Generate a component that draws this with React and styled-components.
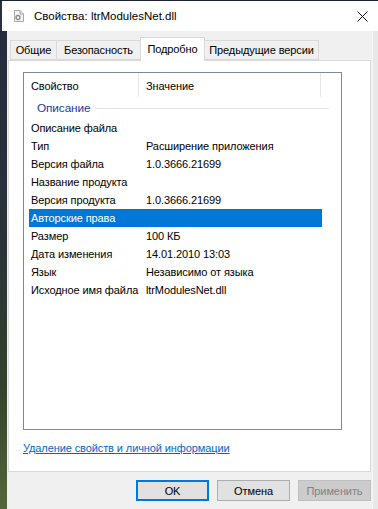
import styled, { createGlobalStyle } from 'styled-components';

const GlobalStyle = createGlobalStyle`
  html, body {
    margin: 0;
    padding: 0;
    background: #1c2132;
  }
  body {
    font-family: "Liberation Sans", Arial, sans-serif;
    font-size: 11px;
    letter-spacing: -0.1px;
    color: #000;
  }
  * {
    box-sizing: border-box;
  }
`;

const Screen = styled.div`
  width: 378px;
  height: 509px;
  padding-top: 1px;
  display: flex;
  flex-direction: column;
  overflow: hidden;
`;

const TitleBar = styled.div`
  height: 30px;
  display: flex;
  align-items: center;
  background: #fff;
  border-left: 2px solid #2a2f40;
  padding-left: 11px;
`;

const TitleText = styled.span`
  margin-left: 10px;
  font-size: 11.5px;
  letter-spacing: 0;
  color: #000;
  flex: 1;
`;

const CloseBtn = styled.div`
  width: 32px;
  height: 30px;
  display: flex;
  align-items: center;
  justify-content: center;
`;

const Body = styled.div`
  flex: 1;
  display: flex;
`;

const DesktopStrip = styled.div`
  width: 7px;
  background: linear-gradient(180deg, #262b3c 0%, #2b3338 45%, #34422c 75%, #56663a 100%);
`;

const Content = styled.div`
  flex: 1;
  background: #f0f0f0;
  padding: 6px 1px 0 1px;
  display: flex;
  flex-direction: column;
`;

const RightEdge = styled.div`
  width: 6px;
  background: #e8e8e8;
  border-left: 1px solid #f6f6f6;
`;

const TabRow = styled.div`
  display: flex;
  align-items: flex-end;
  padding-left: 3px;
  position: relative;
  z-index: 1;
`;

const Tab = styled.div`
  width: ${(p) => p.$w}px;
  height: ${(p) => (p.$active ? '24px' : '20px')};
  margin-bottom: ${(p) => (p.$active ? '-1px' : '0')};
  padding-top: ${(p) => (p.$active ? '4px' : '2px')};
  background: ${(p) => (p.$active ? '#fff' : '#f0f0f0')};
  border: 1px solid #d9d9d9;
  border-bottom: ${(p) => (p.$active ? 'none' : '1px solid #d9d9d9')};
  margin-left: -1px;
  white-space: nowrap;
  text-align: center;
  line-height: 15px;
`;

const Panel = styled.div`
  height: 412px;
  background: #fff;
  border: 1px solid #d9d9d9;
  padding: 11px 28px 0 14px;
  display: flex;
  flex-direction: column;
`;

const ListBox = styled.div`
  height: 358px;
  border: 1px solid #828790;
  display: flex;
  flex-direction: column;
`;

const HeaderRow = styled.div`
  height: 24px;
  display: grid;
  grid-template-columns: 115px 182px 1fr;
`;

const HeaderCell = styled.div`
  padding-left: 7px;
  border-right: 1px solid #e5e5e5;
  display: flex;
  align-items: center;
  padding-top: 1px;
  &:last-child {
    border-right: none;
  }
`;

const GroupRow = styled.div`
  height: 22px;
  display: flex;
  align-items: center;
  padding-left: 13px;
  padding-right: 12px;
  color: #1e3a9e;
  font-size: 11.8px;
`;

const GroupLine = styled.div`
  flex: 1;
  height: 1px;
  background: #e2e2e2;
  margin-left: 5px;
`;

const Row = styled.div`
  height: 18px;
  margin: 0 19px 0 5px;
  display: grid;
  grid-template-columns: 110px 1fr;
  align-items: center;
  background: ${(p) => (p.$selected ? '#0078d7' : 'transparent')};
  color: ${(p) => (p.$selected ? '#fff' : '#000')};
`;

const Cell = styled.div`
  padding-left: 2px;
  white-space: nowrap;
  overflow: hidden;
`;

const ValueCell = styled(Cell)`
  padding-left: 7px;
`;

const Link = styled.a`
  margin-top: 11px;
  line-height: 14px;
  color: #0066cc;
  text-decoration: underline;
  cursor: pointer;
  align-self: flex-start;
`;

const ButtonRow = styled.div`
  display: flex;
  justify-content: flex-end;
  gap: 8px;
  margin-top: 8px;
`;

const Button = styled.button`
  width: 73px;
  height: 21px;
  font-family: inherit;
  font-size: 11px;
  letter-spacing: -0.1px;
  padding: 0;
  background: ${(p) => (p.$disabled ? '#cccccc' : '#e1e1e1')};
  color: ${(p) => (p.$disabled ? '#838383' : '#000')};
  border: ${(p) => (p.$default ? '2px solid #0078d7' : `1px solid ${p.$disabled ? '#bfbfbf' : '#adadad'}`)};
`;

const FileIcon = () => (
  <svg width="11" height="12" viewBox="0 0 11 12">
    <path d="M1.5 0.5h5.5l3.5 3.5v7.5h-9z" fill="#f4f4f4" stroke="#a9a9a9" />
    <path d="M7 0.5v3.5h3.5" fill="none" stroke="#a9a9a9" />
    <circle cx="5" cy="7.5" r="2" fill="none" stroke="#8c8c8c" strokeWidth="1.3" />
  </svg>
);

const CloseIcon = () => (
  <svg width="11" height="11" viewBox="0 0 11 11">
    <path d="M0.5 0.5l10 10M10.5 0.5l-10 10" stroke="#111" strokeWidth="1" />
  </svg>
);

const rows = [
  ['Описание файла', ''],
  ['Тип', 'Расширение приложения'],
  ['Версия файла', '1.0.3666.21699'],
  ['Название продукта', ''],
  ['Версия продукта', '1.0.3666.21699'],
  ['Авторские права', ''],
  ['Размер', '100 КБ'],
  ['Дата изменения', '14.01.2010 13:03'],
  ['Язык', 'Независимо от языка'],
  ['Исходное имя файла', 'ltrModulesNet.dll'],
];

const tabs = [
  { label: 'Общие', w: 47 },
  { label: 'Безопасность', w: 85 },
  { label: 'Подробно', w: 65, active: true },
  { label: 'Предыдущие версии', w: 115 },
];

const App = () => (
  <>
    <GlobalStyle />
    <Screen>
      <TitleBar>
        <FileIcon />
        <TitleText>Свойства: ltrModulesNet.dll</TitleText>
        <CloseBtn><CloseIcon /></CloseBtn>
      </TitleBar>
      <Body>
        <DesktopStrip />
        <Content>
          <TabRow>
            {tabs.map((t) => (
              <Tab key={t.label} $w={t.w} $active={t.active}>{t.label}</Tab>
            ))}
          </TabRow>
          <Panel>
            <ListBox>
              <HeaderRow>
                <HeaderCell>Свойство</HeaderCell>
                <HeaderCell>Значение</HeaderCell>
                <HeaderCell />
              </HeaderRow>
              <GroupRow>
                Описание
                <GroupLine />
              </GroupRow>
              {rows.map(([name, value]) => (
                <Row key={name} $selected={name === 'Авторские права'}>
                  <Cell>{name}</Cell>
                  <ValueCell>{value}</ValueCell>
                </Row>
              ))}
            </ListBox>
            <Link>Удаление свойств и личной информации</Link>
          </Panel>
          <ButtonRow>
            <Button $default>OK</Button>
            <Button>Отмена</Button>
            <Button $disabled>Применить</Button>
          </ButtonRow>
        </Content>
        <RightEdge />
      </Body>
    </Screen>
  </>
);

export default App;
